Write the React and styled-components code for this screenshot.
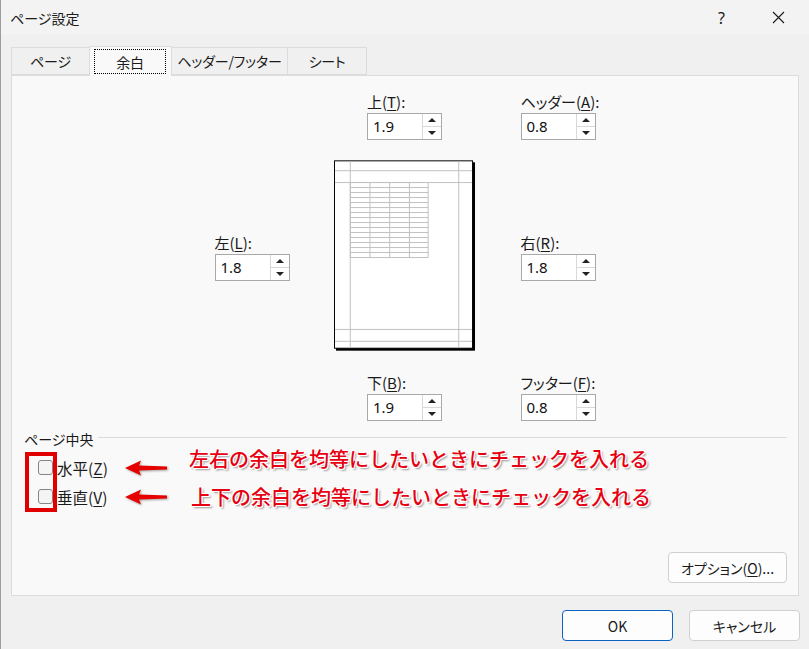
import React from "react";
import styled, { createGlobalStyle } from "styled-components";

const GlobalStyle = createGlobalStyle`
  html, body {
    margin: 0;
    padding: 0;
    background: #f0f0f0;
  }
  body {
    font-family: "Noto Sans CJK JP", "Noto Sans", sans-serif;
    font-size: 15px;
    color: #1a1a1a;
    font-feature-settings: "palt";
  }
  u {
    text-underline-offset: 2px;
  }
`;

const tabs = [
  { id: "page", label: "ページ", width: 79 },
  { id: "margin", label: "余白", width: 83, selected: true },
  { id: "hf", label: "ヘッダー/フッター", width: 117 },
  { id: "sheet", label: "シート", width: 80 },
];

const notes = [
  { id: "h", label: "水平", key: "Z", note: "左右の余白を均等にしたいときにチェックを入れる", lift: -9, indent: 0 },
  { id: "v", label: "垂直", key: "V", note: "上下の余白を均等にしたいときにチェックを入れる", lift: 0, indent: 2 },
];

function Accel({ text, k, tail = ":" }) {
  return (
    <>
      {text}(<u>{k}</u>){tail}
    </>
  );
}

function SpinField({ label, value, className }) {
  return (
    <Field className={className}>
      <FieldLabel>{label}</FieldLabel>
      <Spin>
        <SpinValue>{value}</SpinValue>
        <SpinButtons>
          <SpinHalf $top>
            <Tri $up />
          </SpinHalf>
          <SpinHalf>
            <Tri />
          </SpinHalf>
        </SpinButtons>
      </Spin>
    </Field>
  );
}

function PagePreview() {
  const rows = [];
  for (let i = 0; i <= 15; i += 1) {
    const y = 22.5 + i * 5.07;
    rows.push(<line key={"r" + i} x1="16.5" x2="95.5" y1={y} y2={y} />);
  }
  const cols = [16.5, 36.5, 56.5, 76.5, 95.5].map((x) => (
    <line key={"c" + x} x1={x} x2={x} y1="22.5" y2="98.5" />
  ));
  return (
    <svg width="144" height="194" viewBox="0 0 144 194">
      <rect x="2" y="2" width="141" height="191" fill="#000" />
      <rect x="0.5" y="0.5" width="140" height="190" fill="#fff" stroke="#000" />
      <g stroke="#c0c0c0" strokeWidth="1">
        <line x1="16.5" x2="16.5" y1="1" y2="190" />
        <line x1="126.5" x2="126.5" y1="1" y2="190" />
        <line x1="1" x2="140" y1="10.5" y2="10.5" />
        <line x1="1" x2="140" y1="22.5" y2="22.5" />
        <line x1="1" x2="140" y1="171.5" y2="171.5" />
        <line x1="1" x2="140" y1="183.5" y2="183.5" />
        {rows}
        {cols}
      </g>
    </svg>
  );
}

function RedArrow() {
  return (
    <ArrowSvg width="44" height="18" viewBox="0 0 44 18">
      <polygon
        points="1,9 17,1.5 15,6.5 43,7.6 43,10.4 15,11.5 17,16.5"
        fill="#e60000"
      />
    </ArrowSvg>
  );
}

export default function App() {
  return (
    <>
      <GlobalStyle />
      <Window>
        <TitleBar>
          <Title>ページ設定</Title>
          <CaptionButton>?</CaptionButton>
          <CaptionButton>
            <svg width="13" height="13" viewBox="0 0 13 13">
              <path d="M1 1 L12 12 M12 1 L1 12" stroke="#1a1a1a" strokeWidth="1.1" />
            </svg>
          </CaptionButton>
        </TitleBar>

        <Body>
          <TabList>
            {tabs.map((t) => (
              <Tab key={t.id} $width={t.width} $selected={t.selected}>
                <TabLabel $selected={t.selected}>{t.label}</TabLabel>
              </Tab>
            ))}
          </TabList>

          <Panel>
            <MarginsGrid>
              <Cell />
              <CenterField label={<Accel text="上" k="T" />} value="1.9" />
              <SpinField label={<Accel text="ヘッダー" k="A" />} value="0.8" />

              <MidField label={<Accel text="左" k="L" />} value="1.8" />
              <Preview>
                <PagePreview />
              </Preview>
              <MidField label={<Accel text="右" k="R" />} value="1.8" />

              <Cell />
              <CenterField label={<Accel text="下" k="B" />} value="1.9" />
              <SpinField label={<Accel text="フッター" k="F" />} value="0.8" />
            </MarginsGrid>

            <GroupHeader>
              <GroupTitle>ページ中央</GroupTitle>
              <GroupLine />
            </GroupHeader>

            <CheckRows>
              {notes.map((n) => (
                <CheckRow key={n.id}>
                  <Checkbox />
                  <CheckLabel>
                    <Accel text={n.label} k={n.key} tail="" />
                  </CheckLabel>
                  <RedArrow />
                  <Note $lift={n.lift} $indent={n.indent}>
                    {n.note}
                  </Note>
                </CheckRow>
              ))}
              <RedFrame />
            </CheckRows>

            <OptionsRow>
              <Button $width={119}>
                オプション(<u>O</u>)...
              </Button>
            </OptionsRow>
          </Panel>

          <Footer>
            <Button $width={111} $primary>
              OK
            </Button>
            <Button $width={111}>キャンセル</Button>
          </Footer>
        </Body>
      </Window>
    </>
  );
}

const Window = styled.div`
  width: 809px;
  height: 649px;
  box-sizing: border-box;
  border-left: 1px solid #9c9c9c;
  display: flex;
  flex-direction: column;
  overflow: hidden;
`;

const TitleBar = styled.div`
  height: 35px;
  flex-shrink: 0;
  display: flex;
  align-items: center;
  background: #f3f3f3;
  padding-left: 9px;
  padding-right: 2px;
`;

const Title = styled.div`
  flex: 1;
  font-size: 14px;
`;

const CaptionButton = styled.div`
  width: 57px;
  height: 35px;
  display: flex;
  align-items: center;
  justify-content: center;
  font-family: "Noto Sans", sans-serif;
  font-size: 16px;
`;

const Body = styled.div`
  flex: 1;
  display: flex;
  flex-direction: column;
  padding: 12px 10px 8px 10px;
`;

const TabList = styled.div`
  display: flex;
  align-items: flex-end;
  height: 28px;
`;

const Tab = styled.div`
  position: relative;
  z-index: ${(p) => (p.$selected ? 2 : 1)};
  box-sizing: border-box;
  width: ${(p) => p.$width}px;
  height: ${(p) => (p.$selected ? 30 : 28)}px;
  margin-bottom: ${(p) => (p.$selected ? -1 : 0)}px;
  margin-right: -1px;
  display: flex;
  padding: ${(p) => (p.$selected ? "2px 5px 2px 4px" : "0")};
  border: 1px solid #dcdcdc;
  border-bottom: ${(p) => (p.$selected ? "none" : "1px solid #dcdcdc")};
  background: ${(p) => (p.$selected ? "#f9f9f9" : "#f0f0f0")};
`;

const TabLabel = styled.div`
  flex: 1;
  display: flex;
  align-items: center;
  justify-content: center;
  font-size: 14px;
  white-space: nowrap;
  letter-spacing: -0.2px;
  border: 1px dotted ${(p) => (p.$selected ? "#000" : "transparent")};
`;

const Panel = styled.div`
  box-sizing: border-box;
  height: 521px;
  flex-shrink: 0;
  display: flex;
  flex-direction: column;
  padding: 15px 11px 12px 12px;
  background: #f9f9f9;
  border: 1px solid #dcdcdc;
`;

const MarginsGrid = styled.div`
  display: grid;
  grid-template-columns: 74px 142px 75px;
  column-gap: 45px;
  row-gap: 19px;
  justify-content: center;
  margin-left: -1px;
`;

const Cell = styled.div``;

const Field = styled.div`
  display: flex;
  flex-direction: column;
  width: 75px;
`;

const CenterField = styled(SpinField)`
  justify-self: center;
`;

const MidField = styled(SpinField)`
  align-self: center;
`;

const FieldLabel = styled.div`
  height: 22px;
  line-height: 22px;
  white-space: nowrap;
`;

const Spin = styled.div`
  box-sizing: border-box;
  height: 27px;
  display: flex;
  background: #fff;
  border: 1px solid #a8a8a8;
`;

const SpinValue = styled.div`
  flex: 1;
  padding-left: 5px;
  line-height: 25px;
  font-family: "Noto Sans", sans-serif;
  font-size: 15px;
  color: #111;
`;

const SpinButtons = styled.div`
  width: 18px;
  display: flex;
  flex-direction: column;
  border-left: 1px solid #d8d8d8;
`;

const SpinHalf = styled.div`
  flex: 1;
  display: flex;
  align-items: center;
  justify-content: center;
  border-bottom: ${(p) => (p.$top ? "1px solid #d8d8d8" : "none")};
`;

const Tri = styled.span`
  width: 0;
  height: 0;
  border-left: 4px solid transparent;
  border-right: 4px solid transparent;
  ${(p) =>
    p.$up ? "border-bottom: 4px solid #222;" : "border-top: 4px solid #222;"}
`;

const Preview = styled.div`
  display: flex;
  justify-content: flex-start;
  height: 194px;
`;

const GroupHeader = styled.div`
  margin-top: 8px;
  height: 20px;
  display: flex;
  align-items: center;
  gap: 5px;
`;

const GroupTitle = styled.div`
  font-size: 14px;
  line-height: 20px;
`;

const GroupLine = styled.div`
  flex: 1;
  height: 1px;
  margin-top: -4px;
  background: #dcdcdc;
`;

const CheckRows = styled.div`
  position: relative;
  margin-top: 4px;
  display: flex;
  flex-direction: column;
`;

const CheckRow = styled.div`
  height: 29px;
  display: flex;
  align-items: center;
  padding-left: 14px;
`;

const Checkbox = styled.div`
  box-sizing: border-box;
  width: 15px;
  height: 15px;
  border: 1px solid #858585;
  border-radius: 3px;
  background: #f4f4f4;
`;

const CheckLabel = styled.div`
  margin-left: 4px;
  min-width: 55px;
  white-space: nowrap;
  font-size: 15.5px;
`;

const ArrowSvg = styled.svg`
  margin-left: 12px;
  filter: drop-shadow(1px 1px 1px rgba(0, 0, 0, 0.35));
`;

const Note = styled.div`
  margin-left: ${(p) => 21 + p.$indent}px;
  transform: translateY(${(p) => p.$lift}px);
  font-size: 20px;
  font-weight: 500;
  font-feature-settings: normal;
  color: #e60012;
  white-space: nowrap;
  text-shadow: -1px -1px 0 #fff, 1px -1px 0 #fff, -1px 1px 0 #fff,
    1px 1px 0 #fff, 2px 2px 2px rgba(0, 0, 0, 0.4);
`;

const RedFrame = styled.div`
  position: absolute;
  left: 1px;
  top: -1px;
  width: 32px;
  height: 60px;
  box-sizing: border-box;
  border: 4px solid #e00000;
`;

const OptionsRow = styled.div`
  margin-top: auto;
  display: flex;
  justify-content: flex-end;
`;

const Button = styled.div`
  box-sizing: border-box;
  width: ${(p) => p.$width}px;
  height: 31px;
  display: flex;
  align-items: center;
  justify-content: center;
  font-size: 14px;
  background: #fdfdfd;
  border: 1px solid ${(p) => (p.$primary ? "#0a64bf" : "#d0d0d0")};
  border-radius: 4px;
`;

const Footer = styled.div`
  margin-top: 14px;
  margin-right: -1px;
  display: flex;
  justify-content: flex-end;
  gap: 16px;
`;
